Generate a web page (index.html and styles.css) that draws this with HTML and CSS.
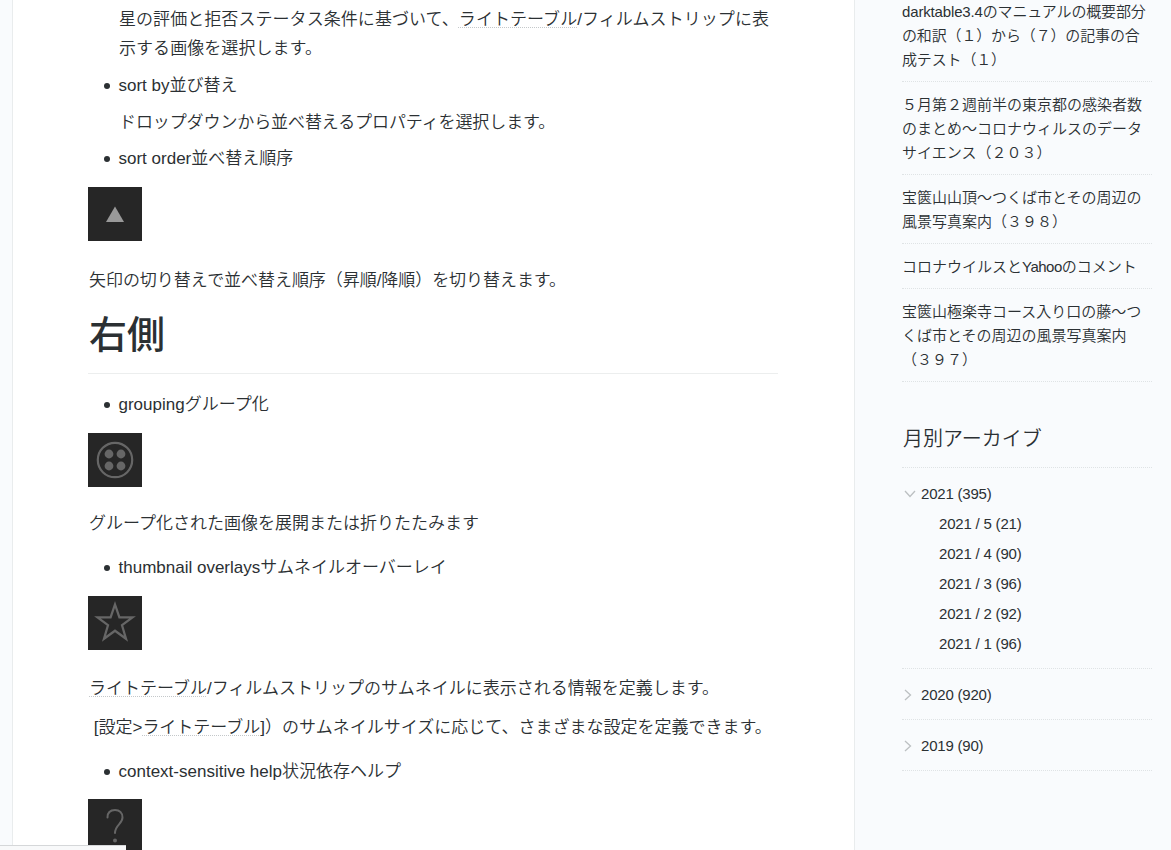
FILE: index.html
```
<!DOCTYPE html>
<html lang="ja">
  <head>
    <meta charset="UTF-8" />
    <meta name="viewport" content="width=device-width, initial-scale=1.0" />
    <title>darktable</title>
    <link rel="stylesheet" href="styles.css">
  </head>
  <body>
    <div class="content">
      <main class="entry">
        <ul>
          <li>
            <p class="first">星の評価と拒否ステータス条件に基づいて、<a class="keyword" href="#">ライトテーブル</a>/フィルムストリップに表示する画像を選択します。</p>
          </li>
          <li class="item">sort by並び替え
            <p>ドロップダウンから並べ替えるプロパティを選択します。</p>
          </li>
          <li class="item">sort order並べ替え順序</li>
        </ul>
        <svg class="icon" viewBox="0 0 54 54">
          <path d="M27 19.5L36 35H18z" fill="#999" />
        </svg>
        <p class="text order">矢印の切り替えで並べ替え順序（昇順/降順）を切り替えます。</p>

        <h1>右側</h1>
        <ul>
          <li class="item">groupingグループ化</li>
        </ul>
        <svg class="icon" viewBox="0 0 54 54">
          <circle cx="27" cy="27" r="17.2" fill="none" stroke="#666" stroke-width="2.2" />
          <g fill="#666">
            <circle cx="21" cy="21" r="4.4" />
            <circle cx="33" cy="21" r="4.4" />
            <circle cx="21" cy="33" r="4.4" />
            <circle cx="33" cy="33" r="4.4" />
          </g>
        </svg>
        <p class="text grouping">グループ化された画像を展開または折りたたみます</p>

        <ul class="overlays">
          <li class="item">thumbnail overlaysサムネイルオーバーレイ</li>
        </ul>
        <svg class="icon" viewBox="0 0 54 54">
          <path d="M27 8.5L31.4 21.3H44.5L34 29.2L38 42.8L27 34.7L16 42.8L20 29.2L9.500 21.3H22.600z" fill="none" stroke="#666" stroke-width="2.3" />
        </svg>
        <p class="text"><a class="keyword" href="#">ライトテーブル</a>/フィルムストリップのサムネイルに表示される情報を定義します。</p>
        <p class="setting">&nbsp;[設定&gt;<a class="keyword" href="#">ライトテーブル</a>]）のサムネイルサイズに応じて、さまざまな設定を定義できます。</p>

        <ul class="help">
          <li class="item">context-sensitive help状況依存ヘルプ</li>
        </ul>
        <svg class="icon" viewBox="0 0 54 54">
          <path d="M19.500 18.500C19.500 13.500 22.500 11 27 11C31.500 11 34.500 14 34.500 18.500C34.500 25 27 26 27 34" fill="none" stroke="#666" stroke-width="2" stroke-linecap="round" />
          <circle cx="27" cy="41.500" r="2" fill="#666" />
        </svg>
      </main>

      <aside class="sidebar">
        <ul class="recent">
          <li><a href="#">darktable3.4のマニュアルの概要部分の和訳（１）から（７）の記事の合成テスト（１）</a></li>
          <li><a href="#">５月第２週前半の東京都の感染者数のまとめ～コロナウィルスのデータサイエンス（２０３）</a></li>
          <li><a href="#">宝篋山山頂～つくば市とその周辺の風景写真案内（３９８）</a></li>
          <li><a href="#">コロナウイルスと<span class="latin">Yahoo</span>のコメント</a></li>
          <li><a href="#">宝篋山極楽寺コース入り口の藤～つくば市とその周辺の風景写真案内（３９７）</a></li>
        </ul>

        <h2>月別アーカイブ</h2>
        <ul class="archive">
          <li>
            <div class="year">
              <svg class="arrow" viewBox="0 0 15 14"><path d="M3 4l5 5.500l5-5.500" /></svg>
              <a href="#">2021 (395)</a>
            </div>
            <ul class="months">
              <li><a href="#">2021 / 5 (21)</a></li>
              <li><a href="#">2021 / 4 (90)</a></li>
              <li><a href="#">2021 / 3 (96)</a></li>
              <li><a href="#">2021 / 2 (92)</a></li>
              <li><a href="#">2021 / 1 (96)</a></li>
            </ul>
          </li>
          <li>
            <div class="year">
              <svg class="arrow" viewBox="0 0 15 14"><path d="M3 2l5.500 5l-5.500 5" /></svg>
              <a href="#">2020 (920)</a>
            </div>
          </li>
          <li>
            <div class="year">
              <svg class="arrow" viewBox="0 0 15 14"><path d="M3 2l5.500 5l-5.500 5" /></svg>
              <a href="#">2019 (90)</a>
            </div>
          </li>
        </ul>
      </aside>
    </div>
    <div class="status-bar"></div>
  </body>
</html>
```

FILE: styles.css
```
* {
  box-sizing: border-box;
}
body {
  margin: 0;
  height: 850px;
  overflow: hidden;
  background-color: #f9fbfd;
  color: #2b3033;
  font-family: "Liberation Sans", "Noto Sans CJK JP", sans-serif;
}
ul {
  margin: 0;
  padding: 0;
  list-style: none;
}
p {
  margin: 0;
}
a {
  color: inherit;
  text-decoration: none;
}
.content {
  display: flex;
  height: 850px;
  padding-left: 12px;
}

/* 記事 */
.entry {
  flex: none;
  width: 843px;
  padding: 5px 76px 0 75px;
  border-left: 1px solid #e9eced;
  border-right: 1px solid #e9eced;
  background-color: #fff;
  font-size: 17px;
  line-height: 29px;
  font-weight: 350;
}
.entry ul {
  padding-left: 30px;
}
.entry p {
  padding-left: 1px;
}
.entry p.first {
  margin-right: -2px;
  letter-spacing: 0.06px;
}
.item {
  margin-top: 8px;
}
.item::before {
  content: "";
  display: inline-block;
  width: 6px;
  height: 6px;
  margin: 0 8.5px 2px -14px;
  border-radius: 50%;
  background-color: #2b3033;
}
.item p {
  margin-top: 8px;
  letter-spacing: -0.1px;
}
.item + .item {
  margin-top: 7px;
}
.icon {
  display: block;
  width: 54px;
  height: 54px;
  margin-top: 14px;
  background-color: #262626;
}
.text {
  margin-top: 24px;
}
.order {
  margin-top: 25px;
  letter-spacing: -0.05px;
}
.keyword {
  text-decoration: underline dotted #c4c8ca 1px;
  text-underline-offset: 2px;
  text-decoration-skip-ink: none;
}
h1 {
  margin: 14px 0 16px;
  padding: 0 0 11px 1px;
  border-bottom: 1px solid #eceeee;
  font-size: 38px;
  line-height: 53px;
  font-weight: 500;
}
h1 + ul .item {
  margin-top: 0;
}
.grouping {
  margin-top: 22px;
}
.overlays .item {
  margin-top: 15px;
}
.setting {
  margin-top: 10px;
}
.help .item {
  margin-top: 15px;
}
.help + .icon {
  margin-top: 13px;
}

/* サイドバー */
.sidebar {
  width: 250px;
  margin-left: 47px;
  font-size: 15px;
  line-height: 24px;
  font-weight: 350;
}
.recent li {
  padding: 11px 0 9px;
  border-bottom: 1px dotted #dfe3e5;
}
.recent li:first-child {
  padding-top: 0;
  letter-spacing: -0.15px;
}
.latin {
  letter-spacing: -0.5px;
}
h2 {
  margin: 40px 0 0;
  padding: 0 0 11px 1px;
  border-bottom: 1px dotted #dfe3e5;
  font-size: 20px;
  line-height: 34px;
  font-weight: 350;
}
.archive {
  line-height: 30px;
  letter-spacing: -0.2px;
}
.archive > li {
  padding: 11px 0 9px;
  border-bottom: 1px dotted #dfe3e5;
}
.year {
  display: flex;
  align-items: center;
  gap: 4px;
}
.arrow {
  width: 15px;
  height: 14px;
  margin-top: -1px;
  fill: none;
  stroke: #bcc0c2;
  stroke-width: 1.3;
}
.months {
  padding-left: 37px;
}

/* 左下のステータス表示 */
.status-bar {
  position: absolute;
  left: 0;
  bottom: 0;
  width: 126px;
  height: 5px;
  border-top: 1px solid #d5d7d9;
  background-color: #f8f9fa;
}
```
